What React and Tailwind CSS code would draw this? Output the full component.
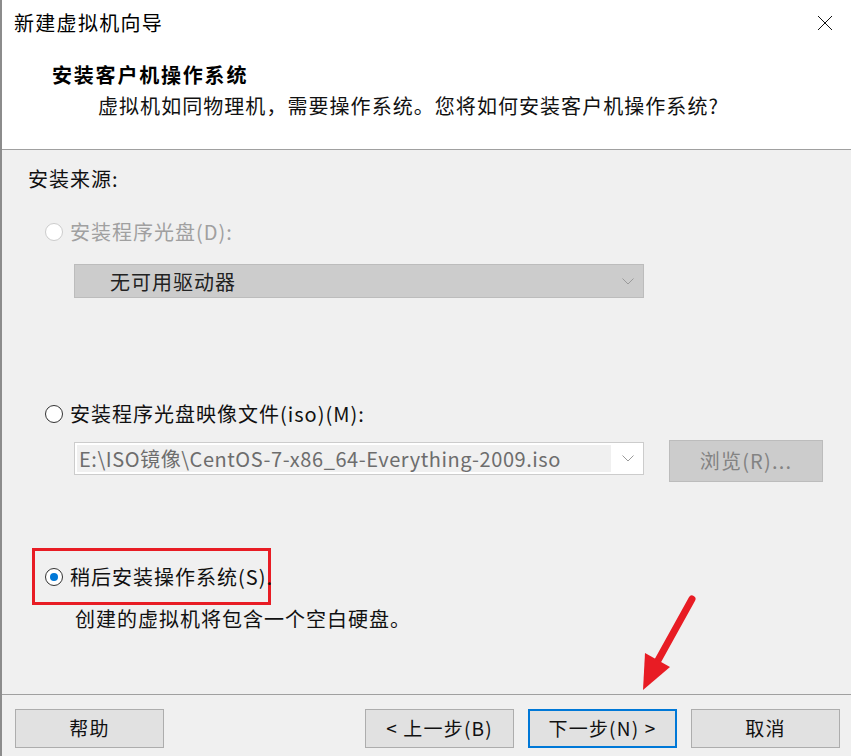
import React from "react";

const font = { fontFamily: '"Noto Sans CJK SC", "Noto Sans", sans-serif' };

const Radio = ({ state }) => {
  if (state === "disabled")
    return <span className="w-[18px] h-[18px] rounded-full border border-[#cccccc] bg-white shrink-0" />;
  if (state === "checked")
    return (
      <span className="w-[18px] h-[18px] rounded-full border border-[#333333] bg-white shrink-0 flex items-center justify-center">
        <span className="w-[8px] h-[8px] rounded-full bg-[#0078d7]" />
      </span>
    );
  return <span className="w-[18px] h-[18px] rounded-full border border-[#333333] bg-white shrink-0" />;
};

const Chevron = ({ color }) => (
  <svg width="12" height="7" viewBox="0 0 12 7" className="shrink-0">
    <path d="M0.5 0.5 L6 6 L11.5 0.5" fill="none" stroke={color} strokeWidth="1" />
  </svg>
);

const Button = ({ children, primary, className = "" }) => (
  <div
    className={`h-[39px] flex items-center justify-center bg-[#e1e1e1] text-[19px] tracking-[1.2px] text-[#111] ${
      primary ? "border-2 border-[#0078d7]" : "border border-[#adadad]"
    } ${className}`}
  >
    {children}
  </div>
);

export default function App() {
  return (
    <div className="relative w-[851px] h-[756px] border-l-2 border-[#8c8c8c] flex flex-col overflow-hidden tracking-[1px]" style={font}>
      {/* title bar */}
      <div className="h-[46px] bg-white flex items-center justify-between pl-[12px] pr-[18px] shrink-0">
        <span className="text-[20px] text-black leading-none tracking-[1.3px]">新建虚拟机向导</span>
        <svg width="16" height="16" viewBox="0 0 16 16">
          <path d="M1 1 L15 15 M15 1 L1 15" stroke="#111" strokeWidth="1" />
        </svg>
      </div>

      {/* header */}
      <div className="bg-white h-[104px] shrink-0 border-b border-[#a0a0a0] pt-[14px] pl-[50px]">
        <div className="text-[20px] font-bold leading-[30px] text-black tracking-[1.8px]">安装客户机操作系统</div>
        <div className="text-[20px] leading-[30px] text-[#111] pl-[46px] mt-[1px] tracking-[1.05px]">
          虚拟机如同物理机，需要操作系统。您将如何安装客户机操作系统?
        </div>
      </div>

      {/* body */}
      <div className="flex-1 bg-[#f0f0f0] flex flex-col pl-[26px] pt-[15px]">
        <div className="text-[20px] leading-[28px] text-[#111]">安装来源:</div>

        <div className="flex items-center gap-[7px] mt-[25px] ml-[17px] h-[28px]">
          <Radio state="disabled" />
          <span className="text-[20px] text-[#a0a0a0]">安装程序光盘(D):</span>
        </div>

        <div className="mt-[18px] ml-[46px] w-[570px] h-[34px] bg-[#cccccc] border border-[#bcbcbc] flex items-center justify-between pl-[35px] pr-[9px]">
          <span className="text-[20px] text-[#222] mt-[2px]">无可用驱动器</span>
          <Chevron color="#9a9a9a" />
        </div>

        <div className="flex items-center gap-[7px] mt-[102px] ml-[17px] h-[28px]">
          <Radio />
          <span className="text-[20px] text-[#111]">安装程序光盘映像文件(iso)(M):</span>
        </div>

        <div className="flex items-start mt-[12px] ml-[46px]">
          <div className="mt-[2px] w-[570px] h-[33px] bg-white border border-[#cccccc] flex items-center pl-[2px] pr-[9px]">
            <div className="w-[534px] h-[27px] bg-[#f0f0f0] flex items-center pl-[2px] text-[20px] tracking-[0.55px] text-[#6d6d6d] whitespace-nowrap overflow-hidden">
              E:\ISO镜像\CentOS-7-x86_64-Everything-2009.iso
            </div>
            <div className="flex-1 flex justify-end">
              <Chevron color="#9a9a9a" />
            </div>
          </div>
          <div className="ml-[25px] w-[154px] h-[42px] bg-[#cccccc] border border-[#bcbcbc] flex items-center justify-center text-[20px] tracking-[1.2px] text-[#838383]">
            浏览(R)...
          </div>
        </div>

        <div className="mt-[66px] ml-[4px] w-[239px] h-[57px] border-[3px] border-[#e81c24] flex items-center pl-[10px]">
          <div className="flex items-center gap-[7px] whitespace-nowrap">
            <Radio state="checked" />
            <span className="text-[20px] text-[#111]">稍后安装操作系统(S).</span>
          </div>
        </div>

        <div className="ml-[47px] text-[20px] leading-[28px] text-[#111]">创建的虚拟机将包含一个空白硬盘。</div>
      </div>

      {/* footer */}
      <div className="h-[62px] shrink-0 bg-[#f0f0f0] border-t border-[#a0a0a0] flex items-start pt-[14px] pl-[13px]">
        <Button className="w-[149px]">帮助</Button>
        <div className="flex-1" />
        <div className="flex gap-[14px] pr-[11px]">
          <Button className="w-[149px]">&lt; 上一步(B)</Button>
          <Button primary className="w-[149px]">下一步(N) &gt;</Button>
          <Button className="w-[149px]">取消</Button>
        </div>
      </div>

      {/* red annotation arrow */}
      <svg className="absolute left-0 top-0 pointer-events-none" width="851" height="756">
        <line x1="690" y1="599" x2="654" y2="664" stroke="#e81c24" strokeWidth="7" strokeLinecap="round" />
        <polygon points="641,690 643,653 668,667" fill="#e81c24" />
      </svg>
    </div>
  );
}
